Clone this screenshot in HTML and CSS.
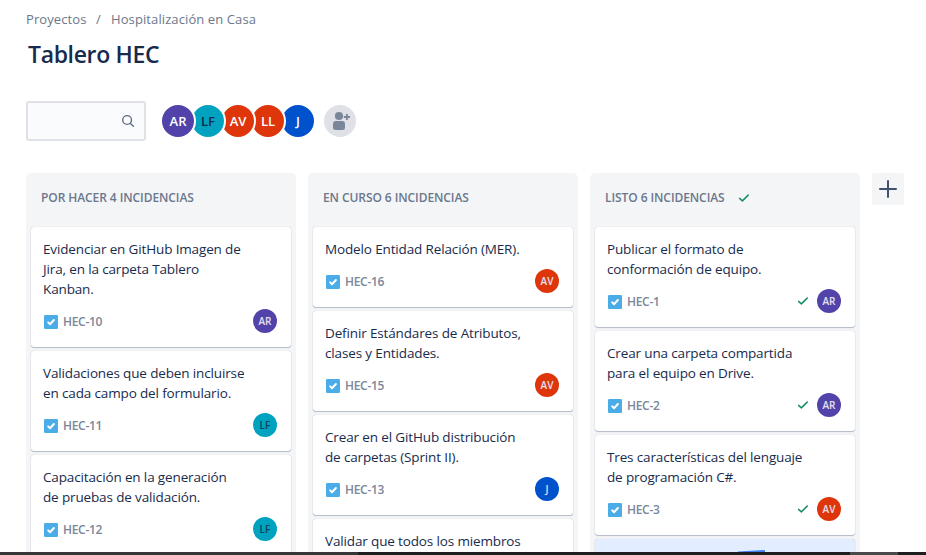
FILE: index.html
```html
<!DOCTYPE html>
<html lang="es">
<head>
<meta charset="utf-8">
<title>Tablero HEC</title>
<link rel="stylesheet" href="styles.css">
</head>
<body>
<svg class="defs" width="0" height="0" aria-hidden="true">
  <symbol id="task" viewBox="0 0 14 14"><rect width="14" height="14" rx="1.2" fill="#4bade8"/><path d="M4.200 7.400 6 9.200 9.900 5" fill="none" stroke="#fff" stroke-width="2" stroke-linecap="round" stroke-linejoin="round"/></symbol>
  <symbol id="done" viewBox="0 0 12 10"><path d="M1.600 5.400 4.400 7.900 10.200 2.100" fill="none" stroke="#1b8f63" stroke-width="1.500" stroke-linecap="round" stroke-linejoin="round"/></symbol>
</svg>
<div class="page">
  <nav class="crumbs"><span class="c1">Proyectos</span><span class="sep">/</span><span class="c2">Hospitalización en Casa</span></nav>
  <h1>Tablero HEC</h1>
  <div class="tools">
    <div class="search"><svg width="14" height="14" viewBox="0 0 14 14"><circle cx="6.100" cy="6" r="4.400"/><path d="M9.400 9.400 12.400 12.300"/></svg></div>
    <div class="people">
      <span class="avatar purple">AR</span><span class="avatar teal">LF</span><span class="avatar red">AV</span><span class="avatar red">LL</span><span class="avatar blue">J</span>
    </div>
    <div class="add-person"><svg width="32" height="32" viewBox="0 0 32 32"><circle cx="15" cy="11" r="4.100"/><path d="M9 19a3 3 0 0 1 3-3h6a3 3 0 0 1 3 3v3.500a2.500 2.500 0 0 1-2.500 2.500h-7a2.500 2.500 0 0 1-2.500-2.500z"/><path d="M22 9h1.800v2.100H26v1.800h-2.200V15H22v-2.100h-2.200v-1.800H22z"/></svg></div>
  </div>
  <main class="board">
    <section class="column">
      <h2><span>POR HACER 4 INCIDENCIAS</span></h2>
      <article class="card"><p>Evidenciar en GitHub Imagen de<br>Jira, en la carpeta Tablero<br>Kanban.</p><footer><svg class="task"><use href="#task"/></svg><span class="key">HEC-10</span><span class="avatar small purple">AR</span></footer></article>
      <article class="card"><p>Validaciones que deben incluirse<br>en cada campo del formulario.</p><footer><svg class="task"><use href="#task"/></svg><span class="key">HEC-11</span><span class="avatar small teal">LF</span></footer></article>
      <article class="card"><p>Capacitación en la generación<br>de pruebas de validación.</p><footer><svg class="task"><use href="#task"/></svg><span class="key">HEC-12</span><span class="avatar small teal">LF</span></footer></article>
    </section>
    <section class="column">
      <h2><span>EN CURSO 6 INCIDENCIAS</span></h2>
      <article class="card"><p>Modelo Entidad Relación (MER).</p><footer><svg class="task"><use href="#task"/></svg><span class="key">HEC-16</span><span class="avatar small red">AV</span></footer></article>
      <article class="card"><p>Definir Estándares de Atributos,<br>clases y Entidades.</p><footer><svg class="task"><use href="#task"/></svg><span class="key">HEC-15</span><span class="avatar small red">AV</span></footer></article>
      <article class="card"><p>Crear en el GitHub distribución<br>de carpetas (Sprint II).</p><footer><svg class="task"><use href="#task"/></svg><span class="key">HEC-13</span><span class="avatar small blue">J</span></footer></article>
      <article class="card"><p>Validar que todos los miembros</p></article>
    </section>
    <section class="column">
      <h2><span>LISTO 6 INCIDENCIAS</span><svg class="done"><use href="#done"/></svg></h2>
      <article class="card"><p>Publicar el formato de<br>conformación de equipo.</p><footer><svg class="task"><use href="#task"/></svg><span class="key">HEC-1</span><svg class="done"><use href="#done"/></svg><span class="avatar small purple">AR</span></footer></article>
      <article class="card"><p>Crear una carpeta compartida<br>para el equipo en Drive.</p><footer><svg class="task"><use href="#task"/></svg><span class="key">HEC-2</span><svg class="done"><use href="#done"/></svg><span class="avatar small purple">AR</span></footer></article>
      <article class="card"><p>Tres características del lenguaje<br>de programación C#.</p><footer><svg class="task"><use href="#task"/></svg><span class="key">HEC-3</span><svg class="done"><use href="#done"/></svg><span class="avatar small red">AV</span></footer></article>
      <article class="card cover"><svg width="260" height="20" viewBox="0 0 260 20"><path d="M143 12.500 170 11v9h-27z" fill="#3d80ef"/></svg></article>
    </section>
    <div class="add-column"><svg width="32" height="32" viewBox="0 0 32 32"><path d="M8 16h16M16 8v16"/></svg></div>
  </main>
</div>
<div class="bar"><i class="first"></i><i class="second"></i><i class="third"></i></div>
</body>
</html>
```

FILE: styles.css
```css
* { box-sizing: border-box; }
body {
  margin: 0;
  height: 555px;
  overflow: hidden;
  display: flex;
  flex-direction: column;
  background: #fff;
  color: #172b4d;
  font: 14px/20px "Open Sans", "Noto Sans", sans-serif;
}
.defs { display: none; }
.page { height: 552px; padding: 9px 0 0 26px; overflow: hidden; }
.crumbs { display: flex; height: 20px; font-size: 13px; color: #6b778c; letter-spacing: 0.1px; white-space: nowrap; }
.sep { width: 24px; padding-right: 1px; text-align: center; }
.c1 { width: 61px; }
h1 { margin: 11px 0 0 2px; height: 28px; font-size: 23px; line-height: 28px; font-weight: 600; letter-spacing: -0.35px; }
.tools { display: flex; align-items: center; height: 40px; margin-top: 33px; }
.search {
  width: 120px; height: 40px;
  display: flex; align-items: center; justify-content: flex-end;
  padding-right: 9px;
  border: 2px solid #dfe1e6; border-radius: 3px; background: #fafbfc;
}
.search svg { fill: none; stroke: #5e6c84; stroke-width: 1.4; stroke-linecap: round; }
.people { display: flex; margin-left: 14px; }
.avatar {
  width: 36px; height: 36px; margin-right: -6px;
  display: flex; align-items: center; justify-content: center;
  border: 2px solid #fff; border-radius: 50%;
  color: #fff; font-size: 13px; font-weight: 600;
}
.people .avatar:nth-child(1) { z-index: 5; }
.people .avatar:nth-child(2) { z-index: 4; }
.people .avatar:nth-child(3) { z-index: 3; }
.people .avatar:nth-child(4) { z-index: 2; }
.people .avatar:nth-child(5) { z-index: 1; }
.purple { background: #5243aa; }
.teal { background: #00a3bf; color: #172b4d; }
.red { background: #de350b; }
.blue { background: #0052cc; }
.avatar.small { width: 24px; height: 24px; margin: 0 2px 0 0; border: 0; font-size: 10px; line-height: 24px; }
.small { color: #e5e1ee; }
.small.teal { color: #124660; }
.add-person { width: 32px; height: 32px; margin-left: 14px; border-radius: 50%; background: #dfe1e6; }
.add-person svg { display: block; fill: #7a869a; }
.board { display: flex; align-items: flex-start; gap: 12px; margin-top: 32px; }
.column {
  width: 270px; height: 410px; padding: 0 5px;
  display: flex; flex-direction: column; gap: 4px;
  border-radius: 5px; background: #f4f5f7;
}
h2 {
  flex: none; display: flex; align-items: center; gap: 13px;
  height: 50px; margin: 0; padding: 0 10px;
  font-size: 12px; font-weight: 600; line-height: 16px; letter-spacing: -0.08px; color: #6b778c; white-space: nowrap;
}
.card {
  flex: none; padding: 12px 12px 14px; background: #fff;
  border-radius: 3px; box-shadow: 0 1px 1px rgba(9,30,66,.25), 0 0 1px rgba(9,30,66,.25);
}
.card p { margin: 0; font-size: 13.5px; letter-spacing: -0.14px; white-space: nowrap; }
.card footer { display: flex; align-items: center; height: 24px; margin-top: 10px; }
.task { width: 14px; height: 14px; margin: 1px 5px 0 1px; }
.key { margin-right: auto; padding-top: 1px; font-size: 12px; font-weight: 600; letter-spacing: -0.3px; color: #7a869a; }
.done { width: 12px; height: 10px; }
footer .done { margin-right: 8px; }
.cover { height: 60px; padding: 0; background: #e2edff; }
.cover svg { display: block; }
.add-column { width: 32px; height: 32px; border-radius: 3px; background: #f4f5f7; }
.add-column svg { display: block; stroke: #42526e; stroke-width: 2; stroke-linecap: round; }
.bar { display: flex; height: 3px; background: #1e1e1e; }
.first { width: 358px; background: #363636; }
.second { width: 492px; }
.third { width: 48px; background: #4a4a4a; }
```
